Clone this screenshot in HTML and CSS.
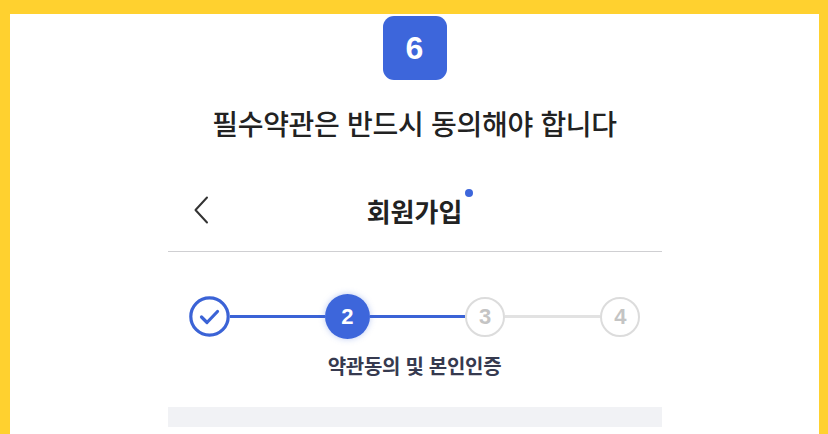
FILE: index.html
```html
<!DOCTYPE html>
<html lang="ko">
<head>
<meta charset="utf-8">
<link rel="stylesheet" href="styles.css">
</head>
<body>
<div class="frame">
  <div class="badge">6</div>
  <h1 class="headline">필수약관은 반드시 동의해야 합니다</h1>
  <div class="screen">
    <div class="appbar">
      <svg class="back" width="16" height="28" viewBox="0 0 16 28"><path d="M14 1.5 L2.5 14 L14 26.5" fill="none" stroke="#333" stroke-width="2" stroke-linecap="round" stroke-linejoin="round"/></svg>
      <div class="title">회원가입<span class="dot"></span></div>
    </div>
    <div class="stepper">
      <div class="step done">
        <svg width="41" height="41" viewBox="0 0 41 41"><circle cx="20.5" cy="20.5" r="18.7" fill="#fff" stroke="#3b63d6" stroke-width="3.2"/><path d="M12.5 21 L18 26.5 L28.5 15.5" fill="none" stroke="#3b63d6" stroke-width="3.2" stroke-linecap="round" stroke-linejoin="round"/></svg>
      </div>
      <div class="line active"></div>
      <div class="step current">2</div>
      <div class="line active"></div>
      <div class="step todo">3</div>
      <div class="line"></div>
      <div class="step todo">4</div>
    </div>
    <div class="step-label">약관동의 및 본인인증</div>
    <div class="greybar"></div>
  </div>
</div>
</body>
</html>
```
FILE: styles.css
```css
html, body {
  margin: 0;
  padding: 0;
  height: 100%;
}
body {
  background: #ffd12f;
  font-family: "Noto Sans CJK KR", "Noto Sans", sans-serif;
  overflow: hidden;
}
.frame {
  margin: 14px 9px 0 10px;
  background: #fff;
  height: 420px;
  display: flex;
  flex-direction: column;
  align-items: center;
}
.badge {
  margin-top: 2px;
  width: 64px;
  height: 64px;
  border-radius: 11px;
  background: #3d66db;
  color: #fff;
  font-family: "Liberation Sans", Arial, sans-serif;
  font-weight: 700;
  font-size: 32px;
  display: flex;
  align-items: center;
  justify-content: center;
}
.headline {
  margin: 23px 0 0;
  font-size: 28px;
  line-height: 40px;
  font-weight: 500;
  color: #222;
  letter-spacing: -0.3px;
}
.screen {
  width: 494px;
  margin-top: 48px;
  display: flex;
  flex-direction: column;
}
.appbar {
  position: relative;
  height: 40px;
  padding-bottom: 20px;
  border-bottom: 1px solid #cfcfd2;
  display: flex;
  align-items: center;
  justify-content: center;
}
.back {
  position: absolute;
  left: 25px;
  top: 5px;
}
.title {
  position: relative;
  font-size: 26px;
  font-weight: 700;
  color: #222;
  line-height: 40px;
}
.dot {
  position: absolute;
  right: -11px;
  top: -2px;
  width: 8px;
  height: 8px;
  border-radius: 50%;
  background: #3d66db;
}
.stepper {
  margin-top: 42px;
  padding: 0 21px;
  display: flex;
  align-items: center;
}
.step {
  flex: none;
  display: flex;
  align-items: center;
  justify-content: center;
  font-family: "Liberation Sans", Arial, sans-serif;
  font-weight: 700;
  border-radius: 50%;
  box-sizing: border-box;
}
.step.done {
  width: 41px;
  height: 41px;
}
.step.done svg {
  display: block;
}
.step.current {
  width: 45px;
  height: 45px;
  background: #3d66db;
  color: #fff;
  font-size: 22px;
  box-shadow: 0 0 6px rgba(61, 102, 219, 0.35);
}
.step.todo {
  width: 40px;
  height: 40px;
  border: 2.5px solid #dcdcdc;
  color: #c4c4c4;
  font-size: 22px;
  background: #fff;
}
.line {
  flex: 1;
  height: 3px;
  background: #e2e2e2;
}
.line.active {
  background: #3b63d6;
}
.step-label {
  margin-top: 14px;
  text-align: center;
  font-size: 20px;
  line-height: 26px;
  font-weight: 700;
  color: #363a4f;
  letter-spacing: -0.3px;
}
.greybar {
  margin-top: 28px;
  height: 20px;
  background: #f1f2f5;
}
```
